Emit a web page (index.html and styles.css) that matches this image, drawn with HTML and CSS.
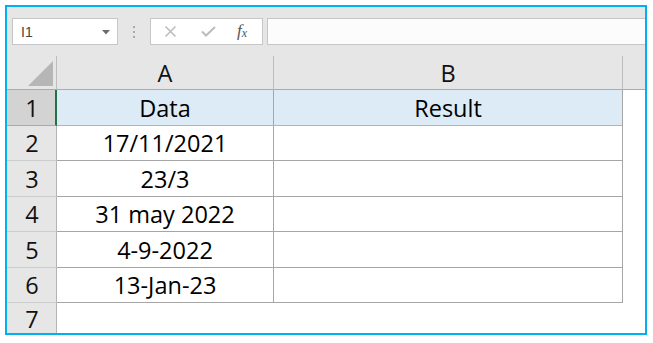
FILE: index.html
```html
<!DOCTYPE html>
<html lang="en">
<head>
  <meta charset="UTF-8">
  <title>Sheet</title>
  <link rel="stylesheet" href="styles.css">
</head>
<body>
  <div class="window">
    <!-- Barra de fórmulas -->
    <div class="formula-bar">
      <div class="name-box">
        <span>I1</span>
        <svg class="arrow" width="8" height="5" viewBox="0 0 8 5"><path d="M0 0h8L4 4.5z" fill="#6d6d6d"/></svg>
      </div>
      <div class="grip"><i></i><i></i><i></i></div>
      <div class="fx-buttons">
        <svg width="13" height="11" viewBox="0 0 13 11"><path d="M1.5 0.5l10 10M11.5 0.5l-10 10" stroke="#bcbcbc" stroke-width="1.5" fill="none"/></svg>
        <svg width="15" height="11" viewBox="0 0 15 11"><path d="M1 5.5l4 4L14 1" stroke="#bcbcbc" stroke-width="2" fill="none"/></svg>
        <span class="fx">f<sub>x</sub></span>
      </div>
      <div class="formula-input"></div>
    </div>

    <!-- Planilha -->
    <div class="sheet">
      <div class="corner"><svg width="27" height="27" viewBox="0 0 27 27"><path d="M26 1V26H1z" fill="#b6b6b6"/></svg></div>
      <div class="col-head">A</div>
      <div class="col-head">B</div>
      <div class="col-head last"></div>

      <div class="row-head active">1</div>
      <div class="cell title">Data</div>
      <div class="cell title">Result</div>
      <div class="blank"></div>

      <div class="row-head">2</div>
      <div class="cell">17/11/2021</div>
      <div class="cell"></div>
      <div class="blank"></div>

      <div class="row-head">3</div>
      <div class="cell">23/3</div>
      <div class="cell"></div>
      <div class="blank"></div>

      <div class="row-head">4</div>
      <div class="cell">31 may 2022</div>
      <div class="cell"></div>
      <div class="blank"></div>

      <div class="row-head">5</div>
      <div class="cell">4-9-2022</div>
      <div class="cell"></div>
      <div class="blank"></div>

      <div class="row-head">6</div>
      <div class="cell">13-Jan-23</div>
      <div class="cell"></div>
      <div class="blank"></div>

      <div class="row-head bottom">7</div>
      <div class="blank"></div>
      <div class="blank"></div>
      <div class="blank"></div>
    </div>
  </div>
</body>
</html>
```

FILE: styles.css
```css
/* Reset básico */
* {
  margin: 0;
  padding: 0;
  box-sizing: border-box;
}
body {
  background: #fff;
  font-family: 'Open Sans', sans-serif;
  color: #000;
}
/* Moldura azul */
.window {
  margin: 5px;
  width: 642px;
  height: 330px;
  border: 2px solid #00b0f0;
  background: #e6e6e6;
  overflow: hidden;
  display: flex;
  flex-direction: column;
}
/* Barra de fórmulas */
.formula-bar {
  height: 49px;
  flex: none;
  display: flex;
  align-items: flex-start;
  padding: 11px 0 0 5px;
}
.name-box {
  width: 106px;
  height: 27px;
  background: #fff;
  border: 1px solid #c6c6c6;
  display: flex;
  align-items: center;
  justify-content: space-between;
  padding: 0 7px 0 8px;
  font-family: 'Liberation Sans', sans-serif;
  font-size: 14px;
  color: #444;
}
.name-box .arrow {
  margin-top: 1px;
}
.grip {
  width: 32px;
  height: 27px;
  display: flex;
  flex-direction: column;
  align-items: center;
  justify-content: center;
  gap: 3px;
}
.grip i {
  display: block;
  width: 2px;
  height: 2px;
  background: #a8a8a8;
}
.fx-buttons {
  width: 113px;
  height: 27px;
  background: #fff;
  border: 1px solid #c6c6c6;
  display: flex;
  align-items: center;
  padding: 0 0 0 13px;
  gap: 24px;
}
.fx {
  font-family: 'Liberation Serif', serif;
  font-style: italic;
  font-size: 17px;
  color: #555;
  margin-left: -3px;
  margin-top: -2px;
}
.fx sub {
  font-size: 12px;
  vertical-align: -1px;
}
.formula-input {
  flex: 1;
  height: 27px;
  margin-left: 4px;
  background: #fcfcfc;
  border: 1px solid #c6c6c6;
  border-right: none;
}
/* Grade */
.sheet {
  flex: 1;
  display: grid;
  grid-template-columns: 50px 217px 349px 1fr;
  grid-template-rows: 34px 36px 35px 36px 35px 36px 35px 1fr;
  background: #fff;
  font-size: 23.5px;
}
.corner {
  background: #e6e6e6;
  border-right: 1px solid #bdbdbd;
  border-bottom: 1px solid #ababab;
  padding: 4px 0 0 20px;
}
.corner svg {
  display: block;
}
.col-head {
  background: #e6e6e6;
  border-right: 1px solid #bdbdbd;
  border-bottom: 1px solid #ababab;
  display: flex;
  align-items: center;
  justify-content: center;
  padding-top: 1px;
  color: #111;
}
.col-head.last {
  border-right: none;
}
.row-head {
  background: #e6e6e6;
  border-right: 1px solid #b4b4b4;
  border-bottom: 1px solid #cdcdcd;
  display: flex;
  align-items: center;
  justify-content: center;
  padding-left: 1px;
  color: #111;
}
.row-head.active {
  background: #d3d3d3;
  border-right: 2px solid #217346;
  border-bottom-color: #ababab;
  padding-left: 2px;
}
.row-head.bottom {
  border-bottom: none;
}
.cell {
  border-right: 1px solid #a6a6a6;
  border-bottom: 1px solid #a6a6a6;
  display: flex;
  align-items: center;
  justify-content: center;
}
.cell.title {
  background: #ddebf7;
  border-bottom-color: #b4b4b4;
}
.blank {
  background: #fff;
}
```
